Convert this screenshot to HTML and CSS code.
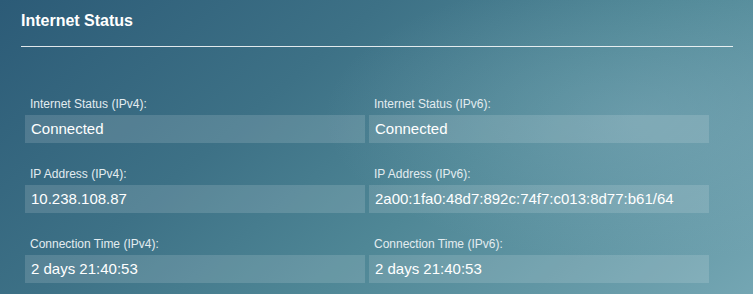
FILE: index.html
```html
<!DOCTYPE html>
<html lang="en">
<head>
    <meta charset="UTF-8">
    <meta name="viewport" content="width=device-width, initial-scale=1.0">
    <title>Internet Status</title>
    <link rel="stylesheet" href="styles.css">
</head>
<body>
    <div class="panel">
        <!-- 标题 -->
        <div class="panel-header">
            <h1 class="panel-title">Internet Status</h1>
        </div>

        <!-- 状态字段 -->
        <div class="status-grid">
            <div class="field">
                <div class="field-label">Internet Status (IPv4):</div>
                <div class="field-value">Connected</div>
            </div>
            <div class="field">
                <div class="field-label">Internet Status (IPv6):</div>
                <div class="field-value">Connected</div>
            </div>
            <div class="field">
                <div class="field-label">IP Address (IPv4):</div>
                <div class="field-value">10.238.108.87</div>
            </div>
            <div class="field">
                <div class="field-label">IP Address (IPv6):</div>
                <div class="field-value">2a00:1fa0:48d7:892c:74f7:c013:8d77:b61/64</div>
            </div>
            <div class="field">
                <div class="field-label">Connection Time (IPv4):</div>
                <div class="field-value">2 days 21:40:53</div>
            </div>
            <div class="field">
                <div class="field-label">Connection Time (IPv6):</div>
                <div class="field-value">2 days 21:40:53</div>
            </div>
        </div>
    </div>
</body>
</html>
```

FILE: styles.css
```css
:root {
    --text-color: #ffffff;
    --label-color: #e3ecf0;
    --field-bg: rgba(255, 255, 255, 0.14);
    --line-color: rgba(255, 255, 255, 0.85);
}

* {
    margin: 0;
    padding: 0;
    box-sizing: border-box;
}

html, body {
    height: 100%;
}

body {
    font-family: 'Liberation Sans', Arial, sans-serif;
    color: var(--text-color);
    background-color: #45798c;
    background-image:
        radial-gradient(ellipse 60% 70% at 85% 40%, rgba(140, 180, 195, 0.35), transparent 70%),
        linear-gradient(140deg, #2c5b77 0%, #3d7186 35%, #4f8796 60%, #74a6b3 100%);
    overflow: hidden;
}

.panel {
    padding: 0 20px 0 21px;
}

.panel-header {
    padding-top: 11px;
    padding-bottom: 15px;
    border-bottom: 1px solid var(--line-color);
}

.panel-title {
    font-size: 16px;
    font-weight: 700;
    line-height: 20px;
}

.status-grid {
    display: grid;
    grid-template-columns: 340px 340px;
    column-gap: 4px;
    row-gap: 24px;
    padding-top: 50px;
    padding-left: 4px;
}

.field-label {
    font-size: 12px;
    line-height: 14px;
    color: var(--label-color);
    padding-left: 5px;
    margin-bottom: 4px;
}

.field-value {
    height: 28px;
    line-height: 28px;
    font-size: 15px;
    padding-left: 6px;
    background-color: var(--field-bg);
    white-space: nowrap;
}
```
